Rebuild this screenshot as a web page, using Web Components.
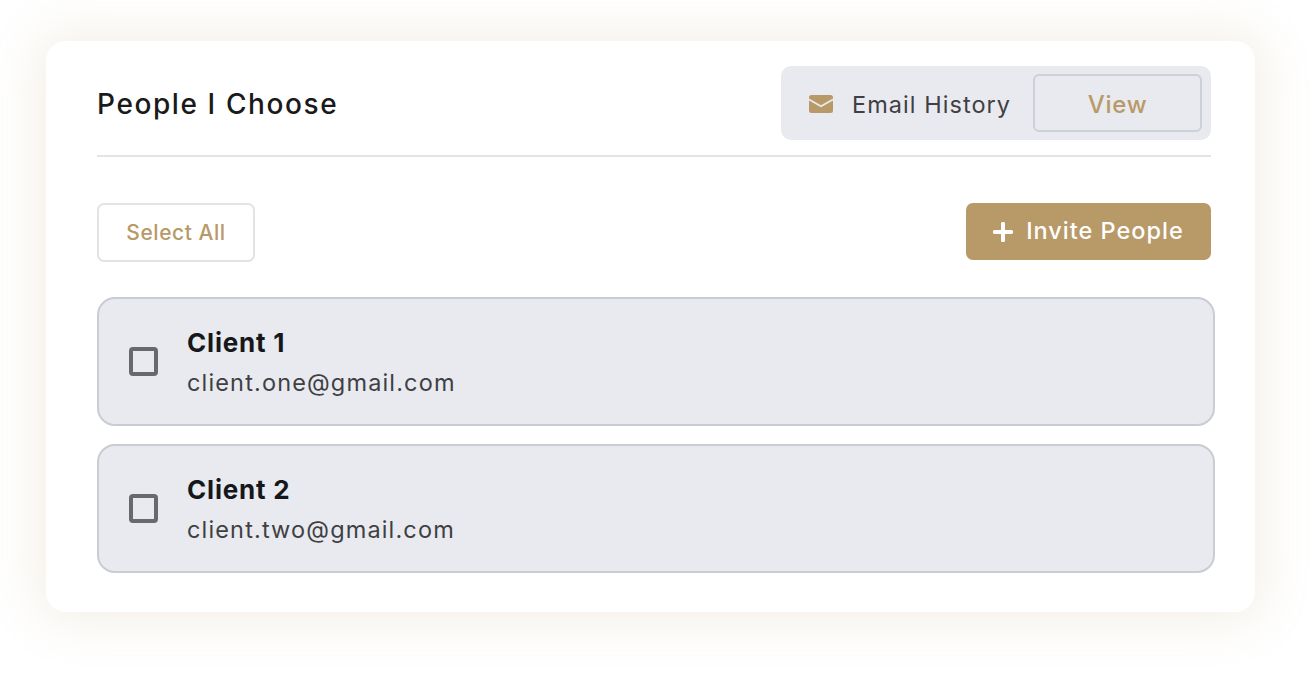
<!DOCTYPE html>
<html lang="en"><head><meta charset="utf-8"><title>People I Choose</title>
<style>
html,body{margin:0;background:#fff}
body{width:1312px;height:679px;overflow:hidden;padding:41px 57px 0 46px;box-sizing:border-box;font-family:Inter,"Liberation Sans",sans-serif}
</style></head><body>
<people-card>
  <span slot="title">People I Choose</span>
  <history-bar slot="history"></history-bar>
  <outline-button slot="left">Select All</outline-button>
  <invite-button slot="right">Invite People</invite-button>
  <client-row name="Client 1" email="client.one@gmail.com"></client-row>
  <client-row name="Client 2" email="client.two@gmail.com"></client-row>
</people-card>
<script>
function def(name, html, init){
  customElements.define(name, class extends HTMLElement{
    connectedCallback(){
      if(this.shadowRoot) return;
      const r=this.attachShadow({mode:'open'});
      r.innerHTML=html;
      if(init) init(r,this);
    }
  });
}
def('people-card',`<style>
:host{display:block;width:1209px;height:571px;box-sizing:border-box;padding:25px 44px 0 51px;background:#fff;border-radius:20px;box-shadow:0 0 50px 8px rgba(184,153,104,.16)}
header{display:flex;align-items:center;justify-content:space-between;padding-bottom:15px;box-sizing:border-box;border-bottom:2px solid #e3e4e6;height:91px}
h1{margin:2px 0 0;font-weight:500;font-size:28px;letter-spacing:1.6px;color:#1a1a1a;line-height:1;font-family:inherit}
.acts{display:flex;justify-content:space-between;align-items:flex-start;margin-top:46px;margin-bottom:35px}
.list{display:flex;flex-direction:column;gap:18px;margin-right:-4px}
</style>
<header><h1><slot name="title"></slot></h1><slot name="history"></slot></header>
<div class="acts"><slot name="left"></slot><slot name="right"></slot></div>
<div class="list"><slot></slot></div>`);
def('history-bar',`<style>
:host{display:flex;align-items:center;width:430px;height:74px;box-sizing:border-box;padding:0 9px 0 28px;background:#e8eaef;border-radius:10px}
svg{width:24px;height:18px;flex:none;margin:1px 19px 0 0}
span{font-size:23.500px;font-weight:400;color:#3f3f44;letter-spacing:1.05px;flex:1;white-space:nowrap;position:relative;top:1px}
b{display:flex;align-items:center;justify-content:center;width:169px;height:58px;box-sizing:border-box;border:2px solid #cdd0d6;border-radius:6px;font-weight:500;font-size:24px;color:#b89968;letter-spacing:.7px;padding-top:2px}
</style>
<svg viewBox="0 0 24 18"><path d="M2.500 0h19A2.500 2.500 0 0 1 24 2.500V3.500L12 10.300 0 3.500V2.500A2.500 2.500 0 0 1 2.500 0z" fill="#b89968"/><path d="M0 5.500 12 12.300 24 5.500V15.500A2.500 2.500 0 0 1 21.500 18h-19A2.500 2.500 0 0 1 0 15.500z" fill="#b89968"/></svg>
<span>Email History</span><b>View</b>`);
def('outline-button',`<style>
:host{display:flex;align-items:center;justify-content:center;width:158px;height:59px;box-sizing:border-box;border:2px solid #e2e3e5;border-radius:7px;background:#fff;color:#b89968;font-size:21px;font-weight:500;letter-spacing:.55px}
</style><slot></slot>`);
def('invite-button',`<style>
:host{display:flex;align-items:center;justify-content:center;gap:13px;width:245px;height:57px;box-sizing:border-box;padding-bottom:2px;border-radius:7px;background:#b89968;color:#fff;font-size:23.500px;font-weight:500;letter-spacing:1px}
svg{width:20px;height:20px;flex:none;margin-top:3px}
</style><svg viewBox="0 0 20 20"><path d="M10 1.800v16.400M1.800 10h16.400" stroke="#fff" stroke-width="4" stroke-linecap="round" fill="none"/></svg><slot></slot>`);
def('client-row',`<style>
:host{display:flex;align-items:center;height:129px;box-sizing:border-box;padding-left:30px;background:#e8eaef;border:2px solid #c9ccd3;border-radius:18px}
i{display:block;width:29px;height:29px;box-sizing:border-box;border:4px solid #68696e;border-radius:4px;flex:none;margin-right:29px}
div{display:flex;flex-direction:column;gap:10px;padding-top:2px}
strong{font-size:26px;font-weight:700;line-height:30px;color:#16171a;letter-spacing:.8px}
span{font-size:23.500px;line-height:30px;color:#3f3f44;letter-spacing:1.15px}
</style><i></i><div><strong></strong><span></span></div>`,(r,h)=>{
  r.querySelector('strong').textContent=h.getAttribute('name');
  r.querySelector('span').textContent=h.getAttribute('email');
});
</script>
</body></html>
